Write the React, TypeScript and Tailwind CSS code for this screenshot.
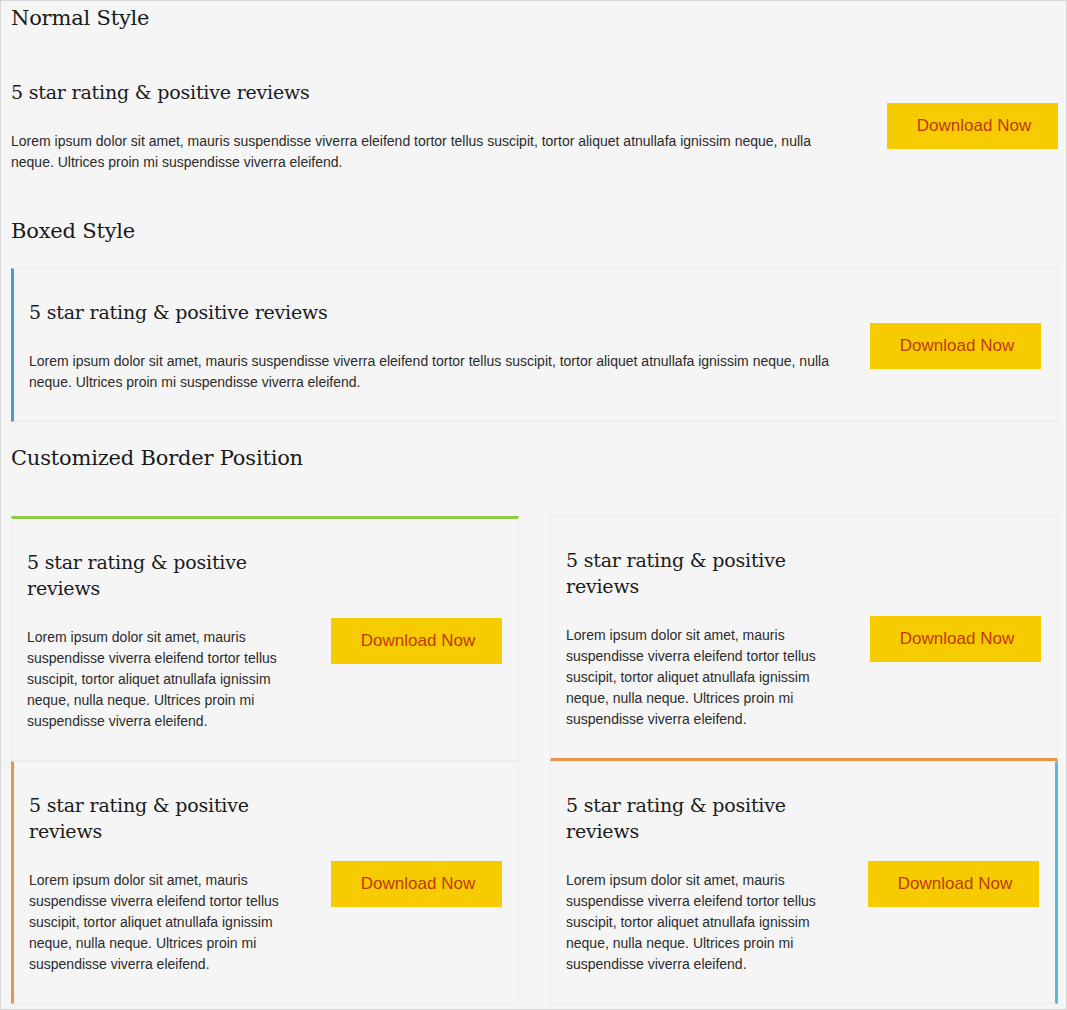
import type { ReactNode } from 'react'

const lorem =
  'Lorem ipsum dolor sit amet, mauris suspendisse viverra eleifend tortor tellus suscipit, tortor aliquet atnullafa ignissim neque, nulla neque. Ultrices proin mi suspendisse viverra eleifend.'

const serif = "font-['DejaVu_Serif',serif]"
const sans = "font-['Liberation_Sans',Arial,sans-serif]"

function SectionHeading({ children, className = '' }: { children: ReactNode; className?: string }) {
  return (
    <h2 className={`${serif} text-[21px] leading-[28px] text-[#1a1a1a] tracking-[-0.2px] ${className}`}>{children}</h2>
  )
}

function Button() {
  return (
    <button className={`${sans} w-[171px] h-[46px] bg-[#f6cb00] text-[#bf3a0c] text-[17px] pl-[3px] shrink-0`}>
      Download Now
    </button>
  )
}

function Content({ narrow }: { narrow?: boolean }) {
  return (
    <div className={narrow ? 'w-[262px]' : 'w-[845px]'}>
      <h3 className={`${serif} text-[19px] leading-[26px] text-[#1a1a1a] tracking-[-0.2px]`}>
        5 star rating &amp; positive reviews
      </h3>
      <p className={`${sans} text-[14px] leading-[21px] text-[#2b2b2b] mt-[26px]`}>{lorem}</p>
    </div>
  )
}

function Card({ className }: { className: string }) {
  return (
    <div className={`flex items-center border-[#ebebeb] pl-[15px] pr-[16px] pt-[30px] pb-[28px] ${className}`}>
      <Content narrow />
      <div className="ml-auto">
        <Button />
      </div>
    </div>
  )
}

export default function App() {
  return (
    <div className="h-[1010px] bg-[#f5f5f5] border border-[#d6d6d6] pl-[10px] pr-[8px] pt-[3px] overflow-hidden">
      <SectionHeading>Normal Style</SectionHeading>

      <div className="flex items-center mt-[47px]">
        <Content />
        <div className="ml-auto">
          <Button />
        </div>
      </div>

      <SectionHeading className="mt-[44px]">Boxed Style</SectionHeading>

      <div className="mt-[23px] flex items-center border border-[#ebebeb] border-l-[3px] border-l-[#4a9ad6] pl-[15px] pr-[16px] pt-[30px] pb-[28px]">
        <Content />
        <div className="ml-auto">
          <Button />
        </div>
      </div>

      <SectionHeading className="mt-[22px]">Customized Border Position</SectionHeading>

      <div className="mt-[44px] grid grid-cols-2 gap-x-[31px]">
        <Card className="border border-t-[3px] border-t-[#8dcc45]" />
        <Card className="border border-b-[3px] border-b-[#e8954c]" />
        <Card className="border border-l-[3px] border-l-[#e8954c]" />
        <Card className="border border-r-[3px] border-r-[#5bb8da] pr-[15px]" />
      </div>
    </div>
  )
}
